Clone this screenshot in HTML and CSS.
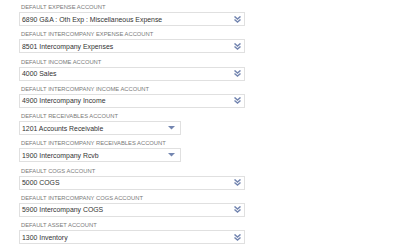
FILE: index.html
```html
<!DOCTYPE html>
<html lang="en">
<head>
    <meta charset="UTF-8">
    <title>Default Accounts</title>
    <link rel="stylesheet" href="styles.css">
</head>
<body>
    <div class="form">
        <div class="field">
            <div class="label">DEFAULT EXPENSE ACCOUNT</div>
            <div class="box">
                <span class="value">6890 G&amp;A : Oth Exp : Miscellaneous Expense</span>
                <svg class="icon" width="7" height="7" viewBox="0 0 7 7"><path d="M0.5 0.5 L3.5 3 L6.5 0.5 M0.5 3.5 L3.5 6 L6.5 3.5" fill="none" stroke="#7385b0" stroke-width="1.5"/></svg>
            </div>
        </div>
        <div class="field">
            <div class="label">DEFAULT INTERCOMPANY EXPENSE ACCOUNT</div>
            <div class="box">
                <span class="value">8501 Intercompany Expenses</span>
                <svg class="icon" width="7" height="7" viewBox="0 0 7 7"><path d="M0.5 0.5 L3.5 3 L6.5 0.5 M0.5 3.5 L3.5 6 L6.5 3.5" fill="none" stroke="#7385b0" stroke-width="1.5"/></svg>
            </div>
        </div>
        <div class="field">
            <div class="label">DEFAULT INCOME ACCOUNT</div>
            <div class="box">
                <span class="value">4000 Sales</span>
                <svg class="icon" width="7" height="7" viewBox="0 0 7 7"><path d="M0.5 0.5 L3.5 3 L6.5 0.5 M0.5 3.5 L3.5 6 L6.5 3.5" fill="none" stroke="#7385b0" stroke-width="1.5"/></svg>
            </div>
        </div>
        <div class="field">
            <div class="label">DEFAULT INTERCOMPANY INCOME ACCOUNT</div>
            <div class="box">
                <span class="value">4900 Intercompany Income</span>
                <svg class="icon" width="7" height="7" viewBox="0 0 7 7"><path d="M0.5 0.5 L3.5 3 L6.5 0.5 M0.5 3.5 L3.5 6 L6.5 3.5" fill="none" stroke="#7385b0" stroke-width="1.5"/></svg>
            </div>
        </div>
        <div class="field">
            <div class="label">DEFAULT RECEIVABLES ACCOUNT</div>
            <div class="box short">
                <span class="value">1201 Accounts Receivable</span>
                <svg class="icon" width="7" height="4" viewBox="0 0 7 4"><path d="M0 0 L7 0 L3.5 3.5 Z" fill="#7385b0"/></svg>
            </div>
        </div>
        <div class="field">
            <div class="label">DEFAULT INTERCOMPANY RECEIVABLES ACCOUNT</div>
            <div class="box short">
                <span class="value">1900 Intercompany Rcvb</span>
                <svg class="icon" width="7" height="4" viewBox="0 0 7 4"><path d="M0 0 L7 0 L3.5 3.5 Z" fill="#7385b0"/></svg>
            </div>
        </div>
        <div class="field">
            <div class="label">DEFAULT COGS ACCOUNT</div>
            <div class="box">
                <span class="value">5000 COGS</span>
                <svg class="icon" width="7" height="7" viewBox="0 0 7 7"><path d="M0.5 0.5 L3.5 3 L6.5 0.5 M0.5 3.5 L3.5 6 L6.5 3.5" fill="none" stroke="#7385b0" stroke-width="1.5"/></svg>
            </div>
        </div>
        <div class="field">
            <div class="label">DEFAULT INTERCOMPANY COGS ACCOUNT</div>
            <div class="box">
                <span class="value">5900 Intercompany COGS</span>
                <svg class="icon" width="7" height="7" viewBox="0 0 7 7"><path d="M0.5 0.5 L3.5 3 L6.5 0.5 M0.5 3.5 L3.5 6 L6.5 3.5" fill="none" stroke="#7385b0" stroke-width="1.5"/></svg>
            </div>
        </div>
        <div class="field">
            <div class="label">DEFAULT ASSET ACCOUNT</div>
            <div class="box">
                <span class="value">1300 Inventory</span>
                <svg class="icon" width="7" height="7" viewBox="0 0 7 7"><path d="M0.5 0.5 L3.5 3 L6.5 0.5 M0.5 3.5 L3.5 6 L6.5 3.5" fill="none" stroke="#7385b0" stroke-width="1.5"/></svg>
            </div>
        </div>
    </div>
</body>
</html>
```

FILE: styles.css
```css
body {
    margin: 0;
    background: #ffffff;
    font-family: "Liberation Sans", Arial, sans-serif;
}
.form {
    padding: 3px 0 0 19px;
    display: flex;
    flex-direction: column;
    gap: 4.25px;
}
.label {
    font-size: 5.8px;
    line-height: 9px;
    color: #7a7a7a;
    padding-left: 2px;
}
.box {
    width: 226px;
    height: 14px;
    box-sizing: border-box;
    border: 1px solid #e0e0e0;
    background: #fff;
    display: flex;
    align-items: center;
    justify-content: space-between;
    padding: 0 3px 0 2px;
}
.box.short {
    width: 162px;
    padding-right: 5px;
}
.value {
    font-size: 6.9px;
    color: #333333;
}
.icon {
    display: block;
}
```
